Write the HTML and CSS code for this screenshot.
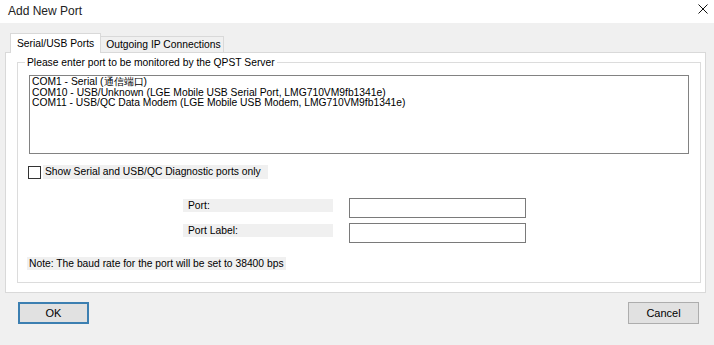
FILE: index.html
```html
<!DOCTYPE html>
<html lang="en">

<head>
  <meta charset="UTF-8">
  <meta name="viewport" content="width=device-width, initial-scale=1.0">
  <title>Add New Port</title>
  <link rel="stylesheet" href="styles.css">
</head>

<body>
  <div class="window">
    <div class="titlebar">
      <span class="title">Add New Port</span>
      <svg class="close" width="10" height="10" viewBox="0 0 10 10">
        <path d="M0.5 0.5 L9.5 9.5 M9.5 0.5 L0.5 9.5" stroke="#111" stroke-width="1" fill="none" />
      </svg>
    </div>

    <div class="client">
      <div class="tabs">
        <div class="tab active">Serial/USB Ports</div>
        <div class="tab">Outgoing IP Connections</div>
      </div>

      <div class="tab-panel">
        <fieldset class="group">
          <legend>Please enter port to be monitored by the QPST Server</legend>

          <div class="listbox">
            <div class="item">COM1 - Serial (通信端口)</div>
            <div class="item">COM10 - USB/Unknown (LGE Mobile USB Serial Port, LMG710VM9fb1341e)</div>
            <div class="item">COM11 - USB/QC Data Modem (LGE Mobile USB Modem, LMG710VM9fb1341e)</div>
          </div>

          <div class="check-row">
            <span class="checkbox"></span>
            <span class="static">Show Serial and USB/QC Diagnostic ports only</span>
          </div>

          <div class="field-row">
            <span class="static field-label">Port:</span>
            <span class="edit"></span>
          </div>
          <div class="field-row">
            <span class="static field-label">Port Label:</span>
            <span class="edit"></span>
          </div>

          <div class="note">
            <span class="static">Note: The baud rate for the port will be set to 38400 bps</span>
          </div>
        </fieldset>
      </div>

      <div class="buttons">
        <button class="btn default">OK</button>
        <button class="btn">Cancel</button>
      </div>
    </div>
  </div>
</body>

</html>
```

FILE: styles.css
```css
body {
  margin: 0;
  background-color: #f0f0f0;
  font-family: 'Liberation Sans', Arial, sans-serif;
  font-size: 10.3px;
  color: #000;
}

.window {
  height: 345px;
  background-color: #f0f0f0;
}

/* title bar */
.titlebar {
  height: 23px;
  background-color: #fff;
  display: flex;
  align-items: center;
  justify-content: space-between;
  padding: 0 6px 0 8px;
}

.title {
  font-size: 12px;
  color: #222;
  margin-top: -2px;
}

.close {
  margin-top: -5px;
}

/* tabs */
.tabs {
  display: flex;
  align-items: flex-end;
  padding-left: 10px;
  margin-top: 10px;
}

.tab {
  height: 15px;
  line-height: 16px;
  padding: 0 2px 0 5px;
  border: 1px solid #d9d9d9;
  border-bottom: none;
  background-color: #f0f0f0;
  margin-left: -1px;
}

.tab.active {
  height: 19px;
  line-height: 19px;
  padding: 0 6px 0 6px;
  background-color: #fff;
  margin-bottom: -1px;
  position: relative;
  z-index: 1;
  margin-left: 0;
}

.tab-panel {
  margin: 0 8px 0 5px;
  border: 1px solid #d9d9d9;
  background-color: #fff;
  padding: 3px 4px 9px 11px;
}

/* group box */
.group {
  margin: 0;
  border: 1px solid #dcdcdc;
  padding: 0 11px 12px 11px;
}

.group legend {
  line-height: 13px;
  padding: 0 2px;
  margin-left: -4px;
}

.listbox {
  margin-top: 6px;
  height: 75px;
  border: 1px solid #828282;
  padding: 1px 2px;
}

.item {
  line-height: 10.5px;
  white-space: nowrap;
}

.static {
  background-color: #f0f0f0;
}

.check-row {
  display: flex;
  align-items: center;
  margin-top: 11px;
  height: 14px;
}

.checkbox {
  width: 11px;
  height: 11px;
  border: 1px solid #333;
  background-color: #fff;
  margin-right: 2px;
  margin-left: -1px;
}

.check-row .static {
  padding: 0 7px 0 2px;
  line-height: 14px;
}

.field-row {
  display: flex;
  align-items: flex-start;
  margin-top: 19px;
  margin-left: 154px;
}

.field-row + .field-row {
  margin-top: 5px;
}

.field-label {
  width: 145px;
  padding-left: 5px;
  height: 13px;
  line-height: 13px;
  margin-top: 1px;
}

.edit {
  width: 175px;
  height: 18px;
  border: 1px solid #7a7a7a;
  margin-left: 16px;
  background-color: #fff;
}

.note {
  margin-top: 14px;
  margin-left: -2px;
}

.note .static {
  padding: 0 2px;
  line-height: 13px;
  display: inline-block;
}

/* dialog buttons */
.buttons {
  display: flex;
  justify-content: space-between;
  padding: 9px 15px 0 18px;
}

.btn {
  width: 71px;
  height: 22px;
  font-family: 'Liberation Sans', Arial, sans-serif;
  font-size: 11px;
  color: #000;
  background-color: #e1e1e1;
  border: 1px solid #adadad;
  padding: 0;
}

.btn.default {
  border: 2px solid #3c7fb1;
}
```
